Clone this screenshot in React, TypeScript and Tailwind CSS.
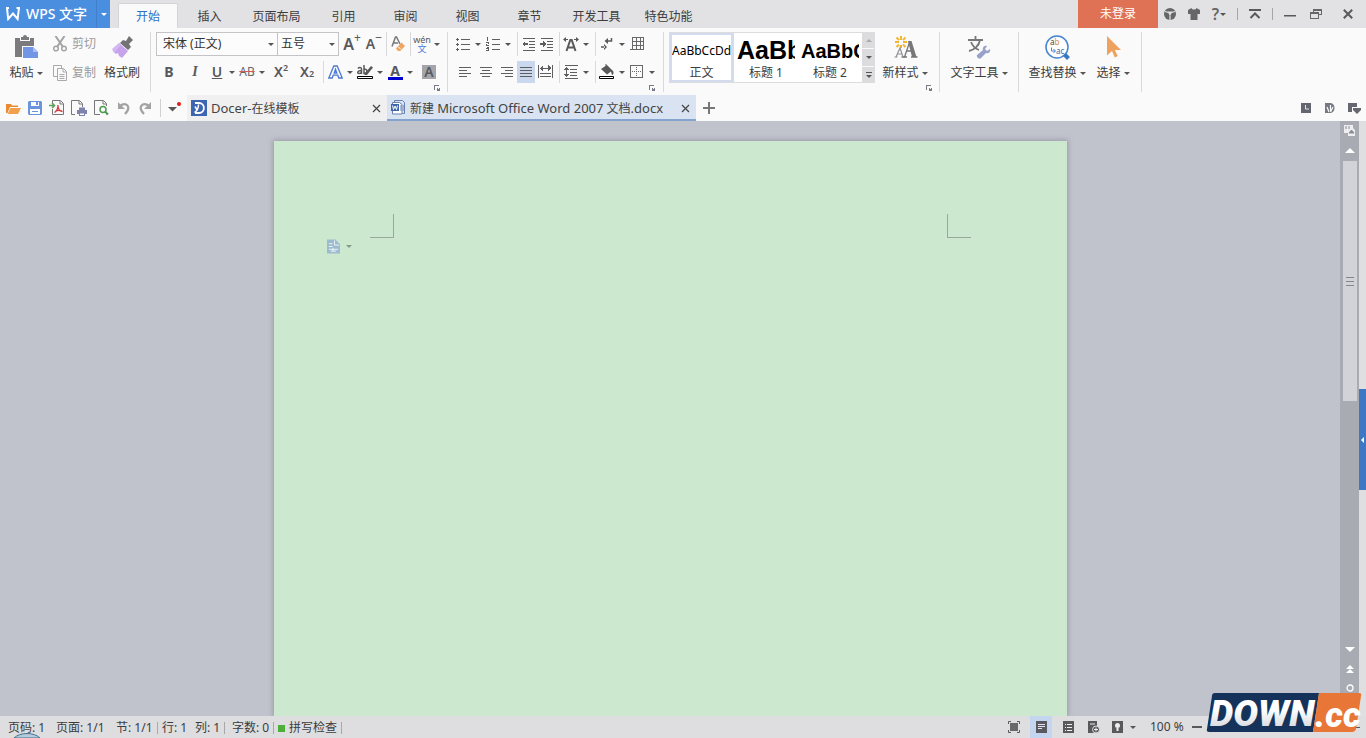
import React from "react";
import clsx from "clsx";

const menuTabs = [
  { label: "插入", wide: false },
  { label: "页面布局", wide: true },
  { label: "引用", wide: false },
  { label: "审阅", wide: false },
  { label: "视图", wide: false },
  { label: "章节", wide: false },
  { label: "开发工具", wide: true },
  { label: "特色功能", wide: true },
];

function Caret({ className = "text-[#555]" }: { className?: string }) {
  return (
    <svg width="6" height="3" viewBox="0 0 6 3" className={clsx("shrink-0", className)}>
      <path d="M0 0h6L3 3z" fill="currentColor" />
    </svg>
  );
}

function CaretButton({ label }: { label: string }) {
  return (
    <button aria-label={label} className="flex h-full w-3 items-center justify-center">
      <Caret />
    </button>
  );
}

function Sep() {
  return (
    <div className="flex h-full w-1.5 justify-center">
      <div className="w-px bg-[#d9d9db]" />
    </div>
  );
}

interface ToolProps {
  label: string;
  width?: string;
  className?: string;
  children: React.ReactNode;
}

function Tool({ label, width = "w-[18px]", className, children }: ToolProps) {
  return (
    <button
      aria-label={label}
      className={clsx("flex h-full items-center justify-center", width, className)}
    >
      {children}
    </button>
  );
}

interface BigToolProps {
  label: string;
  width: string;
  caret?: boolean;
  children: React.ReactNode;
}

function BigTool({ label, width, caret = true, children }: BigToolProps) {
  return (
    <button className={clsx("flex flex-col items-center", width)}>
      <span className="flex h-[30px] shrink-0 items-center justify-center">{children}</span>
      <span className="flex h-[22px] shrink-0 items-center gap-[3px] whitespace-nowrap">
        {label}
        {caret && <Caret />}
      </span>
    </button>
  );
}

function Group({ className, children }: { className?: string; children: React.ReactNode }) {
  return (
    <div className={clsx("flex h-[60px] shrink-0 border-r border-[#d9d9db]", className)}>
      {children}
    </div>
  );
}

function Launcher({ label }: { label: string }) {
  return (
    <div className="flex h-[9px] items-end justify-end pb-px pr-[3px]">
      <button aria-label={label}>
        <svg width="6" height="6" viewBox="0 0 6 6" shapeRendering="crispEdges">
          <path d="M0 0h5v1H1v4H0zM3 3h3v3H3zM4 3v2H3z" fill="#777b86" />
          <path d="M4 3h1v1H4z" fill="#fafafa" />
        </svg>
      </button>
    </div>
  );
}

// horizontal rules given as [x, y, width]
function Lines({ rows, size = 14, children }: { rows: number[][]; size?: number; children?: React.ReactNode }) {
  return (
    <svg width={size} height="14" viewBox={`0 0 ${size} 14`} fill="#5f5f61" shapeRendering="crispEdges">
      {rows.map(([x, y, w], idx) => (
        <rect key={idx} x={x} y={y} width={w} height="1" />
      ))}
      {children}
    </svg>
  );
}

function TitleBar() {
  return (
    <header className="flex h-7 shrink-0 bg-[#e2e2e4]">
      <button className="flex w-24 items-center gap-1.5 bg-[#4a8edf] pl-1.5 text-sm font-medium text-white">
        <svg width="14" height="14" viewBox="0 0 14 14" className="shrink-0">
          <path d="M0 1h3M1 1l1.200 11L7 6.500l4.600 5.500L13 1M10.500 1H14" fill="none" stroke="#fff" strokeWidth="2" />
        </svg>
        <span className="whitespace-nowrap">WPS 文字</span>
      </button>
      <button aria-label="主菜单" className="flex w-3.5 items-center justify-center border-l border-[#3f7fcd] bg-[#4a8edf]">
        <Caret className="text-white" />
      </button>
      <nav className="ml-2 flex items-end">
        <button className="h-[25px] w-[60px] rounded-t-xs border border-b-0 border-[#d4d4d8] bg-[#fafafa] pt-px text-[#2f6fc4]">
          开始
        </button>
        {menuTabs.map((tab) => (
          <button
            key={tab.label}
            className={clsx("h-[25px] pl-px pt-0.5 text-[#3c3c3c]", tab.wide ? "w-[72px]" : "w-[62px]")}
          >
            {tab.label}
          </button>
        ))}
      </nav>
      <div className="ml-auto flex">
        <button className="w-20 bg-[#df7255] text-white">未登录</button>
        <Tool label="社区" width="w-6">
          <svg width="12" height="12" viewBox="0 0 12 12">
            <circle cx="6" cy="6" r="6" fill="#666668" />
            <path d="M1 3.500l3.500 1M11 3.500l-3.500 1M6 7.500V12" stroke="#e2e2e4" strokeWidth="1.200" fill="none" />
            <path d="M3.500 3.500h5L6 8z" fill="#e2e2e4" />
          </svg>
        </Tool>
        <Tool label="皮肤" width="w-6">
          <svg width="12" height="12" viewBox="0 0 12 12">
            <path d="M3.500 0c.6 2 4.400 2 5 0L12 2v4H9.500v6h-7V6H0V2z" fill="#666668" />
          </svg>
        </Tool>
        <Tool label="帮助" width="w-[26px]" className="gap-px text-base font-semibold text-[#666668]">
          <span>?</span>
          <Caret />
        </Tool>
        <div className="my-2 ml-[5px] mr-1 w-px bg-[#a5a5a8]" />
        <Tool label="隐藏功能区" width="w-[26px]">
          <svg width="12" height="10" viewBox="0 0 12 10">
            <path d="M0 1h12M1.500 9L6 4.500 10.500 9" fill="none" stroke="#59595b" strokeWidth="2" />
          </svg>
        </Tool>
        <div className="my-2 ml-1 mr-[5px] w-px bg-[#a5a5a8]" />
        <Tool label="最小化" width="w-6">
          <svg width="12" height="10" viewBox="0 0 12 10">
            <path d="M0 6h12v1.500H0z" fill="#59595b" />
          </svg>
        </Tool>
        <Tool label="还原" width="w-7">
          <svg width="12" height="10" viewBox="0 0 12 10" shapeRendering="crispEdges">
            <path d="M3.500 3V.5h8v5H9M3 1.500h8M.5 3.500h8v6h-8zM0 4.500h8" fill="none" stroke="#666668" />
          </svg>
        </Tool>
        <Tool label="关闭" width="w-9">
          <svg width="10" height="10" viewBox="0 0 10 10">
            <path d="M.8.8l8.400 8.400M9.200.8L.8 9.200" stroke="#59595b" strokeWidth="2" />
          </svg>
        </Tool>
      </div>
    </header>
  );
}

function ClipboardGroup() {
  return (
    <Group className="pl-1 pr-1">
      <BigTool label="粘贴" width="w-11">
        <svg width="25" height="24" viewBox="0 0 25 24">
          <path d="M1 3h5v3h10V3h4v8H8v11H1z" fill="#7b7b7d" />
          <path d="M7 2h2a2 2 0 014 0h2v3H7z" fill="#7b7b7d" />
          <path d="M9 12h10l5 5v6H9z" fill="#7295e6" />
          <path d="M19 12v5h5z" fill="#a9bff3" />
        </svg>
      </BigTool>
      <div className="pl-[5px] text-[#9b9b9d]">
        <button className="flex h-6 w-[45px] items-center gap-[5px] whitespace-nowrap">
          <svg width="14" height="16" viewBox="0 0 14 16" fill="none" stroke="#a3a3a5" strokeWidth="1.500" className="shrink-0">
            <path d="M2.500 0L10 11M11.500 0L4 11" strokeWidth="2" />
            <circle cx="3" cy="12.500" r="2.300" />
            <circle cx="11" cy="12.500" r="2.300" />
          </svg>
          剪切
        </button>
        <button className="mt-[5px] flex h-6 w-[45px] items-center gap-[5px] whitespace-nowrap">
          <svg width="14" height="16" viewBox="0 0 14 16" fill="none" stroke="#a9a9ab" className="shrink-0">
            <path d="M4 11.500H.5V.5h8V3" />
            <path d="M4.500 3.500h6l3 3v9h-9zM10 4v3h3M6.500 9.500h5M6.500 11.500h5M6.500 13.500h5" />
          </svg>
          复制
        </button>
      </div>
      <BigTool label="格式刷" width="w-12" caret={false}>
        <svg width="24" height="24" viewBox="0 0 24 24">
          <path d="M19 1l4 4-4 4 2 3-3 3-8-7 3-3 3 1z" fill="#737375" />
          <path d="M9 8l9 8-6 7-3-2-1-3-2 1-3-3z" fill="#c7a3ec" />
          <path d="M9 8L2 14l2 4 7-8z" fill="#d3b6f2" />
        </svg>
      </BigTool>
    </Group>
  );
}

function FontGroup() {
  return (
    <Group className="pl-[5px] pr-1">
      <div>
        <div className="flex h-6">
          <div className="relative flex w-[122px]">
            <select
              aria-label="字体"
              className="w-full appearance-none border border-[#c4c4c6] bg-[#fcfcfc] pl-1.5 text-[#333]"
            >
              <option>宋体 (正文)</option>
            </select>
            <span className="pointer-events-none absolute inset-y-0 right-1 flex items-center">
              <Caret />
            </span>
          </div>
          <div className="relative flex w-[61px]">
            <select
              aria-label="字号"
              className="w-full appearance-none border border-l-0 border-[#c4c4c6] bg-[#fcfcfc] pl-[3px] text-[#333]"
            >
              <option>五号</option>
            </select>
            <span className="pointer-events-none absolute inset-y-0 right-1 flex items-center">
              <Caret />
            </span>
          </div>
          <Tool label="增大字号" width="w-[26px]" className="text-base font-semibold text-[#59595b]">
            A<sup className="text-xs font-normal">+</sup>
          </Tool>
          <Tool label="减小字号" className="text-sm font-semibold text-[#59595b]">
            A<sup className="text-xs font-normal">−</sup>
          </Tool>
          <Sep />
          <Tool label="清除格式">
            <svg width="14" height="16" viewBox="0 0 14 16">
              <path d="M1 10.500L4.500 1h1L9 8M2.500 7h4.500" fill="none" stroke="#77777a" strokeWidth="1.500" />
              <path d="M10.500 6.500L14 10l-4.500 5H7l-2-2.500z" fill="#efa560" />
              <path d="M7 10.500l3 3" stroke="#fff" />
            </svg>
          </Tool>
          <Sep />
          <Tool label="拼音指南" className="flex-col text-[9px] leading-[9px] text-[#59595b]">
            <span>wén</span>
            <span className="text-[#4c78d8]">文</span>
          </Tool>
          <CaretButton label="拼音选项" />
        </div>
        <div className="mt-[5px] flex h-[22px] text-sm text-[#59595b]">
          <Tool label="加粗" width="w-[26px]" className="font-bold">
            B
          </Tool>
          <Tool label="倾斜" width="w-[26px]" className="font-['Liberation_Serif',serif] font-bold italic">
            I
          </Tool>
          <Tool label="下划线" className="font-semibold">
            <span className="underline">U</span>
          </Tool>
          <CaretButton label="下划线样式" />
          <Tool label="删除线" className="text-xs text-[#68686a]">
            <span className="line-through decoration-[#d45d5d] decoration-1">AB</span>
          </Tool>
          <CaretButton label="删除线选项" />
          <Tool label="上标" width="w-[26px]" className="font-semibold">
            X<sup className="text-[9px]">2</sup>
          </Tool>
          <Tool label="下标" width="w-[26px]" className="font-semibold">
            X<sub className="text-[9px]">2</sub>
          </Tool>
          <Sep />
          <Tool label="文字效果">
            <svg width="15" height="14" viewBox="0 0 15 14" fill="none" stroke="#4c78d8" strokeWidth="1.300">
              <path d="M.8 13L5.800 1h3.400l5 12h-3.400l-1-2.800H5.200l-1 2.800zM6.200 8h2.600L7.500 4.200z" />
            </svg>
          </Tool>
          <CaretButton label="文字效果选项" />
          <Tool label="突出显示" className="flex-col">
            <svg width="16" height="16" viewBox="0 0 16 16">
              <path d="M1 4.500c1-1.500 3.500-1.500 3.500.5v5M4.500 6.500C0 6.500 0 9.500 2 9.500c1.500 0 2.500-1 2.500-2M7 1v8.500c4 .5 4-5.500 0-4" fill="none" stroke="#59595b" strokeWidth="1.500" />
              <path d="M14 2l2 1.500L10 11H7.500l.5-2z" fill="#59595b" />
              <path d="M.5 12.500h15v2H.5z" fill="#fff" stroke="#000" />
            </svg>
          </Tool>
          <CaretButton label="突出显示颜色" />
          <Tool label="字体颜色" className="flex-col leading-3 font-bold">
            A
            <span className="h-[3px] w-[15px] bg-[#0000d0]" />
          </Tool>
          <CaretButton label="选择字体颜色" />
          <Tool label="字符底纹" width="w-[26px]" className="font-semibold">
            <span className="h-3.5 w-3.5 bg-[#a3a5ab] leading-[14px]">A</span>
          </Tool>
        </div>
        <Launcher label="字体设置" />
      </div>
    </Group>
  );
}

function ParagraphGroup() {
  return (
    <Group className="pl-1.5 pr-[5px]">
      <div>
        <div className="flex h-6">
          <Tool label="项目符号">
            <Lines rows={[[5, 2, 9], [5, 7, 9], [5, 12, 9]]}>
              <path d="M1 1h1v3H1zM0 2h3v1H0zM1 6h1v3H1zM0 7h3v1H0zM1 11h1v3H1zM0 12h3v1H0z" />
            </Lines>
          </Tool>
          <CaretButton label="项目符号选项" />
          <Tool label="编号">
            <Lines rows={[[6, 2, 8], [6, 7, 8], [6, 12, 8]]}>
              <path d="M1 0h1v4H1zM0 5h3v2H1v1h2v1H0V7h2V6H0zM0 10h3v4H0v-1h2v-1H0v-1h2z" />
            </Lines>
          </Tool>
          <CaretButton label="编号选项" />
          <Sep />
          <Tool label="减少缩进">
            <Lines rows={[[1, 1, 12], [7, 4, 6], [7, 7, 6], [7, 10, 6], [1, 13, 12]]}>
              <path d="M0 7l3-3v2h3v2H3v2z" />
            </Lines>
          </Tool>
          <Tool label="增加缩进">
            <Lines rows={[[1, 1, 12], [7, 4, 6], [7, 7, 6], [7, 10, 6], [1, 13, 12]]}>
              <path d="M6 7L3 4v2H0v2h3v2z" />
            </Lines>
          </Tool>
          <Sep />
          <Tool label="中文版式">
            <svg width="16" height="16" viewBox="0 0 16 16" className="shrink-0">
              <path d="M3.500 15L7.300 4h1.400l3.800 11M5 11.500h6" fill="none" stroke="#59595b" strokeWidth="2" />
              <path d="M0 3.500L3 1v2h2v1H3v2zM16 3.500L13 1v2h-2v1h2v2z" fill="#59595b" />
            </svg>
          </Tool>
          <CaretButton label="中文版式选项" />
          <Sep />
          <Tool label="显示标记">
            <svg width="12" height="14" viewBox="0 0 12 14">
              <path d="M10.500 1v3H6" fill="none" stroke="#59595b" strokeWidth="1.500" />
              <path d="M3.500 4L7 1v6zM6 10L3 7v6zM0 9.200h4v1.600H0z" fill="#59595b" />
            </svg>
          </Tool>
          <CaretButton label="显示标记选项" />
          <Tool label="插入表格">
            <svg width="14" height="14" viewBox="0 0 14 14" fill="none" stroke="#68686a" shapeRendering="crispEdges">
              <path d="M2.500.5h11v12h-11zM0 12.500h13M2 4.500h12M2 8.500h12M6.500 0v13M10.500 0v13" />
            </svg>
          </Tool>
        </div>
        <div className="mt-[5px] flex h-[22px]">
          <Tool label="左对齐" width="w-[21px]">
            <Lines rows={[[1, 2, 12], [1, 5, 8], [1, 8, 12], [1, 11, 8]]} />
          </Tool>
          <Tool label="居中对齐" width="w-[21px]">
            <Lines rows={[[1, 2, 12], [3, 5, 8], [1, 8, 12], [3, 11, 8]]} />
          </Tool>
          <Tool label="右对齐" width="w-[21px]">
            <Lines rows={[[1, 2, 12], [5, 5, 8], [1, 8, 12], [5, 11, 8]]} />
          </Tool>
          <Tool label="两端对齐" className="bg-[#c9d8ec]">
            <Lines rows={[[1, 2, 12], [1, 5, 12], [1, 8, 12], [1, 11, 12]]} />
          </Tool>
          <Tool label="分散对齐" width="w-[21px]">
            <Lines size={15} rows={[[2, 3, 11], [2, 8, 11], [2, 11, 11]]}>
              <path d="M0 0h1v13H0zM14 0h1v13h-1zM2 3l3-3v7zM13 3l-3-3v7z" />
            </Lines>
          </Tool>
          <Sep />
          <Tool label="行距">
            <Lines rows={[[1, 0, 13], [6, 4, 7], [6, 7, 7], [6, 10, 7], [1, 13, 13]]}>
              <path d="M0 5l2.500-3L5 5zM2 5h1v4H2zM0 9h5l-2.500 3z" />
            </Lines>
          </Tool>
          <CaretButton label="行距选项" />
          <Sep />
          <Tool label="底纹颜色">
            <svg width="16" height="16" viewBox="0 0 16 16">
              <path d="M2 5l6-4 5 5c2 1 2 4 .5 5-1-.5-1-2-1.500-3.500L8 10.500z" fill="#59595b" />
              <path d="M7 0v4" stroke="#59595b" />
              <path d="M.5 12.500h14v2H.5z" fill="#fff" stroke="#000" />
            </svg>
          </Tool>
          <CaretButton label="选择底纹颜色" />
          <Tool label="边框">
            <svg width="14" height="14" viewBox="0 0 14 14" fill="none" stroke="#68686a" shapeRendering="crispEdges">
              <path d="M.5.5h12v12H.5z" />
              <path d="M6.500 2v10M2 6.500h10" strokeDasharray="1 1" />
            </svg>
          </Tool>
          <CaretButton label="边框选项" />
        </div>
        <Launcher label="段落设置" />
      </div>
    </Group>
  );
}

interface StyleCardProps {
  label: string;
  selected?: boolean;
  text: string;
  sample: string;
}

function StyleCard({ label, selected, text, sample }: StyleCardProps) {
  return (
    <button
      className={clsx(
        "flex flex-col items-start overflow-hidden",
        selected ? "w-[65px] border-3 border-[#d3dcee]" : "w-16 border-3 border-white"
      )}
    >
      <span className={clsx("flex h-[30px] w-full shrink-0 items-center overflow-hidden text-black", sample)}>
        {text}
      </span>
      <span className="w-full text-center leading-[15px]">{label}</span>
    </button>
  );
}

function StyleGroup() {
  return (
    <Group className="pl-[5px] pr-1">
      <div>
        <div className="flex h-[51px]">
          <div className="flex bg-white outline -outline-offset-1 outline-[#dcdcde]">
            <StyleCard label="正文" selected text="AaBbCcDd" sample="pt-0.5 text-xs" />
            <StyleCard label="标题 1" text="AaBb" sample="pt-0.5 font-['Liberation_Sans',sans-serif] text-[25px] font-bold" />
            <StyleCard label="标题 2" text="AaBbC" sample="pt-0.5 font-['Liberation_Sans',sans-serif] text-xl font-bold" />
            <div className="flex w-[13px] flex-col gap-px bg-[#fafafa]">
              <Tool label="上一行" width="w-full" className="flex-1 bg-[#dcdcde]">
                <Caret className="rotate-180 text-[#aaa]" />
              </Tool>
              <Tool label="下一行" width="w-full" className="flex-1 bg-[#dcdcde]">
                <Caret />
              </Tool>
              <Tool label="更多样式" width="w-full" className="flex-1 flex-col gap-0.5 bg-[#dcdcde]">
                <span className="h-px w-1.5 bg-[#555]" />
                <Caret />
              </Tool>
            </div>
          </div>
          <BigTool label="新样式" width="w-[60px]">
            <svg width="26" height="24" viewBox="0 0 26 24">
              <path d="M9 1v4M9 10v3M3 7h4M11 7h4M4.500 2.500l2.500 2.500M13.500 2.500L11 5M4.500 12L7 9.500M13.500 12L11 9.500" stroke="#f2b632" strokeWidth="2" />
              <path d="M4 22l4-9 3 9M5.500 19h4M2.500 22h3M9 22h4" stroke="#929295" fill="none" strokeWidth="1.200" />
              <path d="M12.500 22L18 6" stroke="#77777a" strokeWidth="1.300" />
              <path d="M16 6h3.500L24.500 22H20z" fill="#77777a" />
              <path d="M14 16h7M10.500 22h4.500M19 22h6.500" stroke="#77777a" strokeWidth="1.300" />
            </svg>
          </BigTool>
        </div>
        <Launcher label="样式设置" />
      </div>
    </Group>
  );
}

function Ribbon() {
  return (
    <div className="flex shrink-0 overflow-hidden bg-[#fafafa] pb-[3px] pt-1">
      <ClipboardGroup />
      <FontGroup />
      <ParagraphGroup />
      <StyleGroup />
      <Group>
        <BigTool label="文字工具" width="w-[78px]">
          <svg width="24" height="24" viewBox="0 0 24 24">
            <path d="M1 5h15M8.500 1v4M13 5c-1 6-6 10-11 11M4 7c2 5 5 7 8 8" fill="none" stroke="#77777a" strokeWidth="1.800" />
            <path d="M10 20l6-5c-1-3 2-5 4-4l-2 3 2 2 3-2c1 3-2 5-4 4l-5 5c-2 2-5-1-4-3z" fill="#98a1cb" />
          </svg>
        </BigTool>
      </Group>
      <Group className="pl-1 pr-1.5">
        <BigTool label="查找替换" width="w-[68px]">
          <svg width="26" height="26" viewBox="0 0 26 26">
            <circle cx="13" cy="13" r="11" fill="#fff" stroke="#4584cf" strokeWidth="1.500" />
            <path d="M20.500 20.500l4 4" stroke="#3877c4" strokeWidth="4" />
            <text x="6" y="11" fontSize="8" fill="#444">
              a<tspan fill="#d98b43">b</tspan>
            </text>
            <text x="12" y="20" fontSize="8" fill="#3c66a8">ac</text>
            <path d="M7.500 13.500v3.500H11M9.500 15l2 2-2 2" fill="none" stroke="#4584cf" />
          </svg>
        </BigTool>
        <BigTool label="选择" width="w-11">
          <svg width="16" height="24" viewBox="0 0 16 24">
            <path d="M2 1l14 14H9.800l3 6-3 1.500L7 16l-5 4.500z" fill="#eea25e" />
          </svg>
        </BigTool>
      </Group>
    </div>
  );
}

function CloseTab({ label }: { label: string }) {
  return (
    <button aria-label={label}>
      <svg width="9" height="9" viewBox="0 0 9 9">
        <path d="M1 1l7 7M8 1L1 8" stroke="#444" strokeWidth="1.200" />
      </svg>
    </button>
  );
}

function DocumentTabs() {
  return (
    <div className="flex h-[26px] shrink-0 bg-[#fafafa] pl-0.5 text-[#444]">
      <Tool label="打开" width="w-[22px]">
        <svg width="15" height="13" viewBox="0 0 15 13">
          <path d="M0 2h5l1 1.500h6V5H4L1.500 11H0z" fill="#e88b32" />
          <path d="M4.500 6H15l-3 6H1.500z" fill="#f2a04c" />
        </svg>
      </Tool>
      <Tool label="保存" width="w-[22px]">
        <svg width="14" height="14" viewBox="0 0 14 14">
          <path d="M1 0h12l1 1v12l-1 1H1l-1-1V1z" fill="#6b93de" />
          <path d="M3 1h8v4H3zM2 8h10v5H2z" fill="#fff" />
          <path d="M8 1h2v3H8zM4 10h6v1H4z" fill="#6b93de" />
        </svg>
      </Tool>
      <Tool label="输出为PDF" width="w-[22px]">
        <svg width="16" height="16" viewBox="0 0 16 16" fill="none">
          <path d="M3.500 3V.5h8l3 3v11h-11V9M11 1v3h3" stroke="#77777a" />
          <path d="M0 5.500h5M3 3l2.500 2.500L3 8" stroke="#5b9e57" strokeWidth="1.500" />
          <path d="M5.500 12.500C8 11 9 8 9 5M9 6c0 3 2 5 4.500 5.500M6.500 11c2-1 4-1 6.500 0" stroke="#d33c3c" strokeWidth="1.300" />
        </svg>
      </Tool>
      <Tool label="打印" width="w-[22px]">
        <svg width="16" height="16" viewBox="0 0 16 16" fill="none">
          <path d="M4 14.500H.5V.5h8l3 3V7M8 1v3h3" stroke="#77777a" />
          <path d="M6 10h10v4H6zM8 7.500h6V10H8zM8 13h6v3H8z" fill="#7d83ad" />
          <path d="M9 13.500h4v1.500H9z" fill="#fff" />
        </svg>
      </Tool>
      <Tool label="打印预览" width="w-[22px]">
        <svg width="15" height="16" viewBox="0 0 15 16" fill="none">
          <path d="M6 14.500H.5V.5h9l3 3V6M9 1v3h3M12.500 13v1.500" stroke="#77777a" />
          <circle cx="9" cy="9.500" r="3" stroke="#4e9a52" strokeWidth="1.500" />
          <path d="M11 11.500l3 3" stroke="#4e9a52" strokeWidth="2" />
        </svg>
      </Tool>
      <Tool label="撤销" width="w-[22px]">
        <svg width="13" height="13" viewBox="0 0 13 13">
          <path d="M3 4c6-5 12 1 5 8" fill="none" stroke="#a3a3a5" strokeWidth="2.200" />
          <path d="M1 0v7h7z" fill="#a3a3a5" />
        </svg>
      </Tool>
      <Tool label="恢复" width="w-[22px]">
        <svg width="13" height="13" viewBox="0 0 13 13">
          <path d="M10 4C4-1-2 5 5 12" fill="none" stroke="#a3a3a5" strokeWidth="2.200" />
          <path d="M12 0v7H5z" fill="#a3a3a5" />
        </svg>
      </Tool>
      <div className="mx-1 my-1 w-px bg-[#d0d0d2]" />
      <Tool label="自定义快速访问工具栏" width="w-5">
        <svg width="14" height="12" viewBox="0 0 14 12">
          <path d="M0 5h9L4.500 9.500z" fill="#59595b" />
          <circle cx="11" cy="2" r="2" fill="#e01b1b" />
        </svg>
      </Tool>
      <div className="ml-0.5 flex w-[200px] items-center bg-[#f0f0f1] pl-1 pr-1.5">
        <button className="flex flex-1 items-center gap-1 whitespace-nowrap">
          <svg width="16" height="16" viewBox="0 0 16 16">
            <path d="M0 0h16v16H0z" fill="#3c66b1" />
            <path d="M4 3h4c6.500 0 6.500 10 0 10H4" fill="none" stroke="#fff" strokeWidth="1.800" />
            <path d="M7.500 4.500c0 4-1 6-4 8M4 6.500l2.500 4" fill="none" stroke="#fff" strokeWidth="1.500" />
          </svg>
          <span className="pt-px">
            <span className="text-[13px]">Docer-</span>在线模板
          </span>
        </button>
        <CloseTab label="关闭 Docer-在线模板" />
      </div>
      <div className="flex w-[309px] items-center bg-[#d9e3f1] pl-1 pr-1.5 shadow-[inset_0_-2px_0_#85a3cf]">
        <button className="flex flex-1 items-center gap-1 whitespace-nowrap">
          <svg width="15" height="15" viewBox="0 0 15 15" fill="none" className="shrink-0">
            <path d="M3.500 2V.5h8l2 2v11h-2" stroke="#6680b0" />
            <path d="M1.500 4V2.500h7l2.500 2v9.500H1.500V11" stroke="#6680b0" fill="#fff" />
            <path d="M0 4h8v7H0z" fill="#4167ab" />
            <path d="M1.500 5.500l1 4L4 6l1.500 3.500 1-4" stroke="#fff" />
            <path d="M9 6h2M9 8h2M9 10h2M13 5v6" stroke="#6680b0" />
          </svg>
          <span className="pt-px">
            新建 <span className="text-[13px]">Microsoft Office Word 2007</span> 文档
            <span className="text-[13px]">.docx</span>
          </span>
        </button>
        <CloseTab label="关闭文档" />
      </div>
      <Tool label="新建标签" width="w-[26px]">
        <svg width="12" height="12" viewBox="0 0 12 12">
          <path d="M5 0h2v5h5v2H7v5H5V7H0V5h5z" fill="#77777a" />
        </svg>
      </Tool>
      <div className="ml-auto flex">
        <Tool label="历史版本" width="w-6">
          <svg width="10" height="10" viewBox="0 0 10 10">
            <path d="M0 0h10v10H0z" fill="#646770" />
            <path d="M4.500 2v4H8" stroke="#e4e5ea" fill="none" />
          </svg>
        </Tool>
        <Tool label="在线素材" width="w-6">
          <svg width="10" height="10" viewBox="0 0 10 10">
            <path d="M0 0h5c6 0 6 10 0 10H0z" fill="#767983" />
            <path d="M2 4l2 5M5.500 2v6M8 4L5.500 9" stroke="#fafafa" strokeWidth="1.200" />
          </svg>
        </Tool>
        <Tool label="标签列表" width="w-6">
          <svg width="13" height="11" viewBox="0 0 13 11">
            <path d="M0 0h9v4H4v5H0z" fill="#646770" />
            <path d="M5 5h8v2L9 11 5 7z" fill="#646770" />
          </svg>
        </Tool>
      </div>
    </div>
  );
}

function Workspace() {
  return (
    <main className="flex min-h-0 flex-1 bg-[#c0c2cc]">
      <div className="flex flex-1 overflow-hidden pt-5">
        <article className="mx-auto w-[793px] bg-[#cce8cf] pt-[73px] shadow-[0_0_5px_1px_#9a9aa8]">
          <div className="flex justify-between px-24">
            <div className="h-6 w-6 border-b border-r border-[#9aa89c]" />
            <div className="h-6 w-6 border-b border-l border-[#9aa89c]" />
          </div>
          <button aria-label="段落布局" className="ml-[53px] mt-px flex items-center gap-1.5">
            <svg width="13" height="15" viewBox="0 0 14 15">
              <path d="M0 0h9l5 5v10H0z" fill="#9cbad0" />
              <path d="M8 1v5h5M2 4.500h4M2 7.500h4M2 10.500h10M4 12.500h6M6.500 9v4" stroke="#eff8f5" fill="none" />
            </svg>
            <Caret className="text-[#84998a]" />
          </button>
        </article>
      </div>
      <div className="flex w-[19px] flex-col items-center bg-[#a9abb3]">
        <button aria-label="选择浏览模式" className="flex h-[19px] items-center">
          <svg width="11" height="11" viewBox="0 0 11 11">
            <path d="M0 0h9v3l2 2v6H4V8H0z" fill="#eeeef1" />
            <path d="M2 1v3M5 1v3M5 8h5L7.500 5z" stroke="#888b94" fill="#888b94" />
          </svg>
        </button>
        <button aria-label="向上滚动" className="flex h-[21px] items-center">
          <svg width="10" height="5" viewBox="0 0 10 5">
            <path d="M0 5l5-5 5 5z" fill="#fff" />
          </svg>
        </button>
        <div className="mb-auto flex h-60 w-3.5 flex-col items-center justify-center gap-[3px] bg-[#d2d3d6]">
          <span className="h-px w-2 bg-[#86868a]" />
          <span className="h-px w-2 bg-[#86868a]" />
          <span className="h-px w-2 bg-[#86868a]" />
        </div>
        <div className="flex h-[76px] flex-col items-center">
          <button aria-label="向下滚动" className="flex h-[19px] items-center">
            <svg width="10" height="5" viewBox="0 0 10 5">
              <path d="M0 0h10L5 5z" fill="#fff" />
            </svg>
          </button>
          <button aria-label="上一页" className="flex h-[19px] items-center">
            <svg width="8" height="8" viewBox="0 0 8 8">
              <path d="M0 4l4-4 4 4zM0 8l4-4 4 4z" fill="#fff" />
            </svg>
          </button>
          <button aria-label="选择浏览对象" className="flex h-[19px] items-center">
            <svg width="8" height="8" viewBox="0 0 8 8">
              <circle cx="4" cy="4" r="3" fill="none" stroke="#fff" strokeWidth="1.300" />
            </svg>
          </button>
          <button aria-label="下一页" className="flex h-[19px] items-center">
            <svg width="8" height="8" viewBox="0 0 8 8">
              <path d="M0 0h8L4 4zM0 4h8L4 8z" fill="#fff" />
            </svg>
          </button>
        </div>
      </div>
      <div className="flex w-[7px] flex-col justify-center bg-[#dfdfe1]">
        <button aria-label="展开任务窗格" className="mt-[42px] flex h-[101px] items-center justify-center bg-[#3e78c5]">
          <svg width="3" height="6" viewBox="0 0 3 6">
            <path d="M3 0v6L0 3z" fill="#fff" />
          </svg>
        </button>
      </div>
    </main>
  );
}

function StatusSep() {
  return <span className="h-3 w-px bg-[#a8a8aa]" />;
}

function StatusBar() {
  return (
    <footer className="relative flex h-[22px] shrink-0 items-center overflow-hidden bg-[#dedee0] text-[#3c3c3c]">
      <div className="flex items-center whitespace-nowrap pl-2 pt-0.5">
        <span className="w-12">页码: 1</span>
        <span className="w-[60px]">页面: 1/1</span>
        <span className="w-[41px]">节: 1/1</span>
        <StatusSep />
        <span className="ml-1 w-[33px]">行: 1</span>
        <span className="w-[29px]">列: 1</span>
        <StatusSep />
        <span className="ml-[7px] w-[41px]">字数: 0</span>
        <StatusSep />
        <button className="flex items-center gap-1 px-1">
          <span className="h-[7px] w-[7px] bg-[#4eae3a]" />
          拼写检查
        </button>
        <StatusSep />
      </div>
      <svg width="26" height="5" viewBox="0 0 26 5" className="absolute bottom-0 left-3.5">
        <path d="M0 5C6-1 20-1 26 5z" fill="#b5cbdc" stroke="#41718f" />
      </svg>
      <div className="ml-auto flex h-full items-center">
        <Tool label="全屏显示" width="w-[26px]">
          <svg width="12" height="12" viewBox="0 0 12 12">
            <path d="M.5 3V.5H3M9 .5h2.500V3M11.500 9v2.500H9M3 11.500H.5V9" fill="none" stroke="#59595b" />
            <path d="M2 2h8v8H2z" fill="#68686a" />
          </svg>
        </Tool>
        <Tool label="页面视图" width="w-[22px]" className="mx-[3px] bg-[#c4d6ef]">
          <svg width="11" height="12" viewBox="0 0 11 12">
            <path d="M0 0h11v12H0z" fill="#59595f" />
            <path d="M2 3.500h7M2 5.500h7M2 7.500h4" stroke="#dfe6f2" />
          </svg>
        </Tool>
        <Tool label="大纲视图" width="w-[26px]">
          <svg width="11" height="12" viewBox="0 0 11 12">
            <path d="M0 0h11v12H0z" fill="#59595b" />
            <path d="M2 3.500h1M4 3.500h5M2 6.500h1M4 6.500h5M2 9.500h1M4 9.500h5" stroke="#eee" />
          </svg>
        </Tool>
        <Tool label="Web版式" width="w-[26px]">
          <svg width="12" height="12" viewBox="0 0 12 12">
            <path d="M0 0h9v12H0z" fill="#59595b" />
            <path d="M2 3h5" stroke="#eee" />
            <circle cx="8" cy="8.500" r="3.500" fill="#59595b" stroke="#dedee0" />
            <path d="M6 8.500h4M8 6.500v4" stroke="#eee" />
          </svg>
        </Tool>
        <Tool label="护眼模式" width="w-5">
          <svg width="11" height="12" viewBox="0 0 11 12">
            <path d="M0 0h11v12H0z" fill="#59595b" />
            <circle cx="5.500" cy="4.500" r="2.500" fill="#eee" />
            <path d="M4.500 7h2v3h-2z" fill="#eee" />
          </svg>
        </Tool>
        <CaretButton label="护眼模式选项" />
        <span className="ml-[11px] w-[42px] whitespace-nowrap">100 %</span>
        <button aria-label="缩小" className="h-0.5 w-2.5 bg-[#59595b]" />
        <input
          type="range"
          aria-label="显示比例"
          defaultValue={50}
          className="ml-2 h-0.5 w-36 appearance-none bg-[#a8a8aa] [&::-webkit-slider-thumb]:h-2.5 [&::-webkit-slider-thumb]:w-2.5 [&::-webkit-slider-thumb]:appearance-none [&::-webkit-slider-thumb]:rounded-full [&::-webkit-slider-thumb]:bg-[#a8a8aa]"
        />
        <button aria-label="放大" className="mr-1.5 h-px w-1.5 bg-[#59595b]" />
      </div>
    </footer>
  );
}

function Watermark() {
  return (
    <svg
      width="156"
      height="42"
      viewBox="0 0 156 42"
      className="pointer-events-none absolute bottom-1 right-1 font-[Roboto,sans-serif] font-black italic"
    >
      <defs>
        <linearGradient id="chrome" x1="0" y1="0" x2="0" y2="1">
          <stop offset="0.4" stopColor="#ffffff" />
          <stop offset="1" stopColor="#c9ccd1" />
        </linearGradient>
      </defs>
      <path d="M9 1h104l-6 39H3q-3 0-2-3L6 4q0-3 3-3z" fill="#15325a" />
      <path d="M113 1h40q3 0 2 3l-5 33q-1 3-4 3h-39z" fill="#e87636" />
      <text x="4" y="34" fontSize="37" fill="url(#chrome)">
        DOWN
      </text>
      <text x="109" y="35" fontSize="35" fill="#fff">
        .cc
      </text>
    </svg>
  );
}

export default function App() {
  return (
    <div className="relative flex h-screen flex-col overflow-hidden font-['Noto_Sans','Noto_Sans_CJK_SC',sans-serif] text-xs text-[#3c3c3c]">
      <TitleBar />
      <Ribbon />
      <DocumentTabs />
      <Workspace />
      <StatusBar />
      <Watermark />
    </div>
  );
}
